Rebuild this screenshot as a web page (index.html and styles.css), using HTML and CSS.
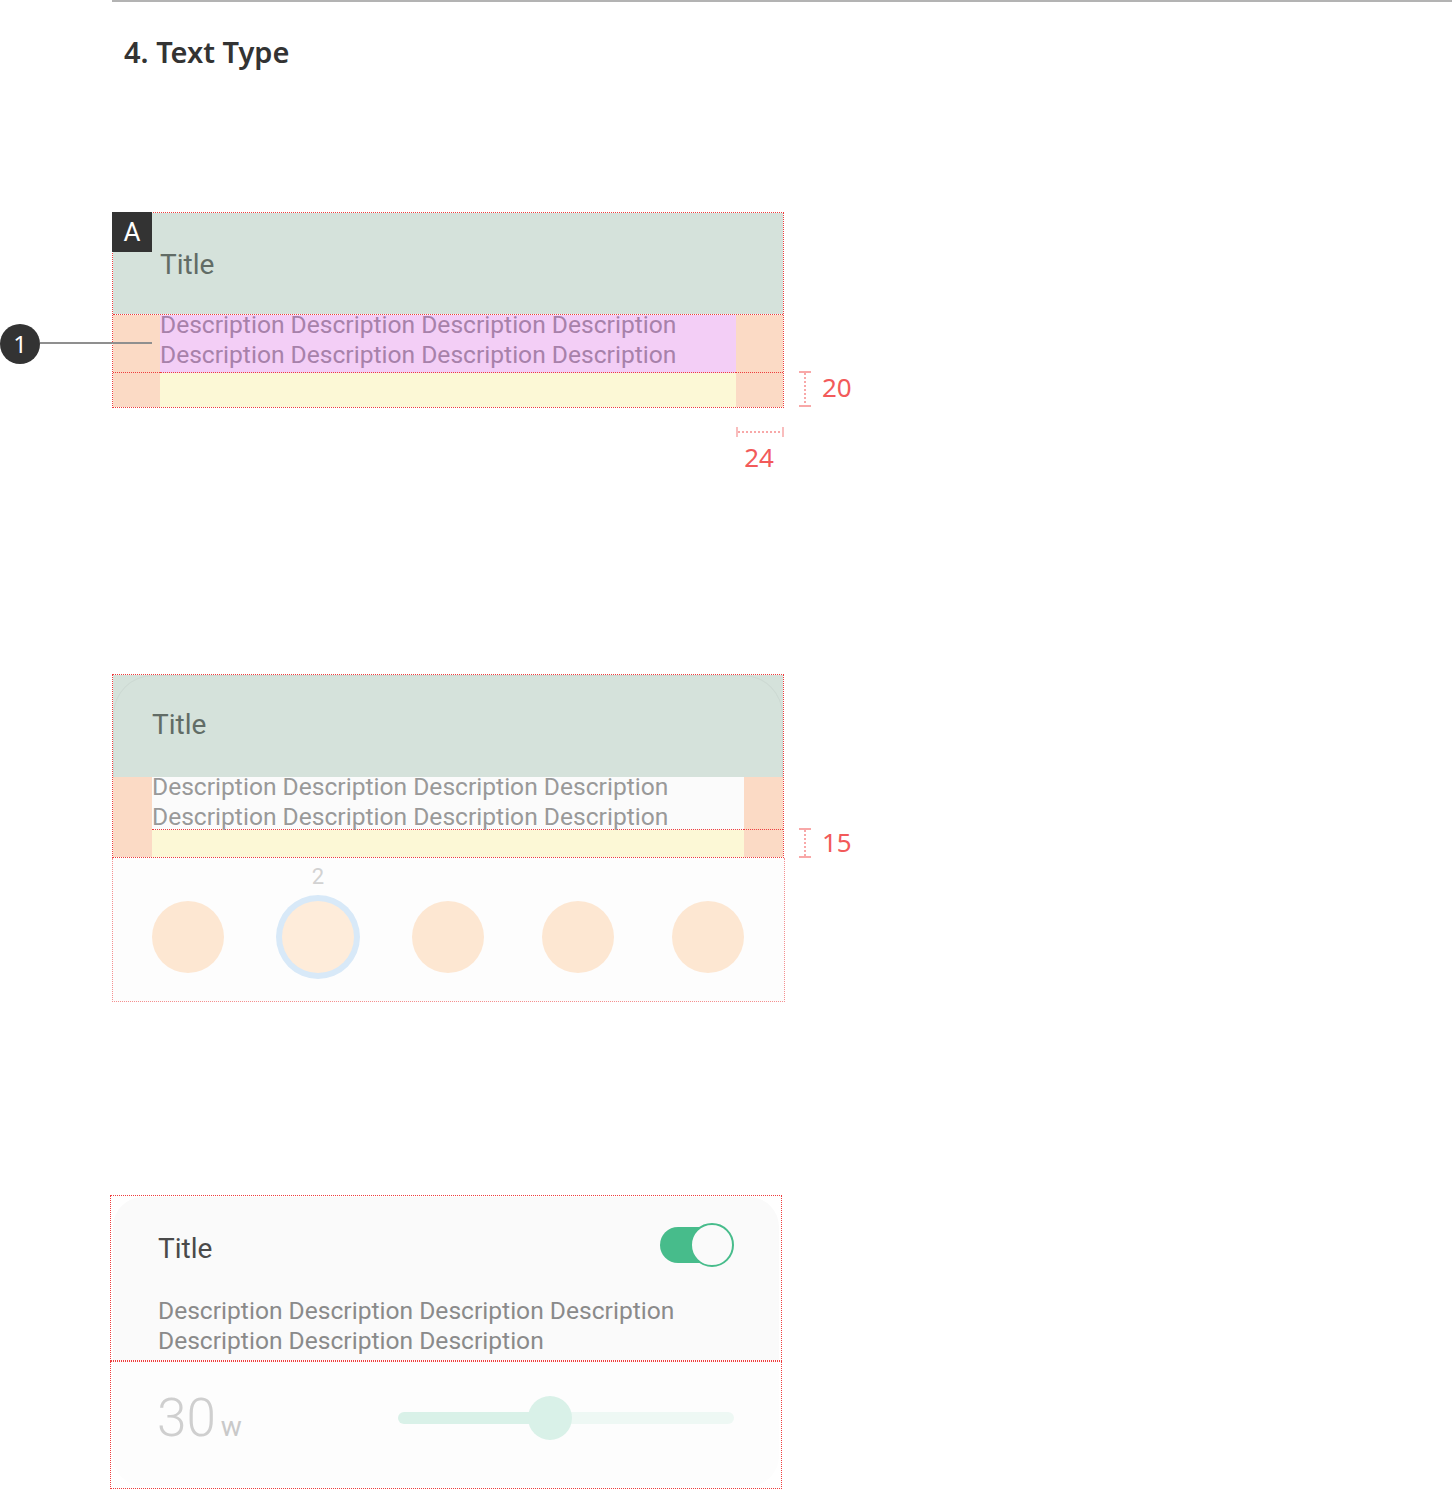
FILE: index.html
```html
<!DOCTYPE html>
<html>
  <head>
    <meta charset="utf-8">
    <link rel="stylesheet" href="styles.css">
  </head>
  <body>
    <div class="page">
      <div class="doc-rule"></div>
      <h2 class="section-title">4. Text Type</h2>

      <!-- A: title + description spec -->
      <section class="spec spec-a">
        <div class="title-area"><span class="item-title">Title</span></div>
        <div class="desc-grid">
          <div class="cell pad"></div>
          <div class="cell desc-cell">
            <p class="desc">Description Description Description Description Description Description Description Description</p>
          </div>
          <div class="cell pad"></div>
          <div class="cell pad"></div>
          <div class="cell bottom-space"></div>
          <div class="cell pad"></div>
        </div>
        <span class="tag">A</span>
        <div class="marker">
          <span class="marker-dot">1</span>
          <span class="marker-line"></span>
        </div>
        <div class="dim-v dim-a">
          <svg width="12" height="36" viewBox="0 0 12 36">
            <path d="M0 1H12M0 35H12" stroke="#f8a8a8" stroke-width="2"/>
            <path d="M6 2V34" stroke="#f8a8a8" stroke-width="2" stroke-dasharray="2 2"/>
          </svg>
          <span class="dim-label">20</span>
        </div>
        <div class="dim-h">
          <svg width="48" height="10" viewBox="0 0 48 10">
            <path d="M1 0V10M47 0V10" stroke="#f8a8a8" stroke-width="1.5"/>
            <path d="M2 5H46" stroke="#f8a8a8" stroke-width="2" stroke-dasharray="2 2"/>
          </svg>
          <span class="dim-label">24</span>
        </div>
      </section>

      <!-- B: title + description + colour picker -->
      <section class="spec spec-b">
        <div class="title-area rounded"><span class="item-title">Title</span></div>
        <div class="desc-grid">
          <div class="cell pad"></div>
          <div class="cell desc-cell">
            <p class="desc">Description Description Description Description Description Description Description Description</p>
          </div>
          <div class="cell pad"></div>
          <div class="cell pad"></div>
          <div class="cell bottom-space"></div>
          <div class="cell pad"></div>
        </div>
        <div class="dim-v dim-b">
          <svg width="12" height="30" viewBox="0 0 12 30">
            <path d="M0 1H12M0 29H12" stroke="#f8a8a8" stroke-width="2"/>
            <path d="M6 2V28" stroke="#f8a8a8" stroke-width="2" stroke-dasharray="2 2"/>
          </svg>
          <span class="dim-label">15</span>
        </div>
      </section>
      <div class="picker">
        <span class="swatch"></span>
        <span class="swatch selected"><span class="swatch-value">2</span></span>
        <span class="swatch"></span>
        <span class="swatch"></span>
        <span class="swatch"></span>
      </div>

      <!-- C: switch + slider -->
      <section class="setting">
        <div class="setting-main">
          <div class="setting-card card-top">
            <div class="setting-head">
              <span class="setting-title">Title</span>
              <span class="toggle">
                <span class="toggle-track"></span>
                <span class="toggle-thumb"></span>
              </span>
            </div>
            <p class="setting-desc">Description Description Description Description Description Description Description</p>
          </div>
        </div>
        <div class="setting-extra">
          <div class="setting-card card-bottom">
            <div class="level-row">
              <div class="level">
                <span class="level-value">30</span>
                <span class="level-unit">w</span>
              </div>
              <div class="slider"><span class="slider-thumb"></span></div>
            </div>
          </div>
        </div>
      </section>
    </div>
  </body>
</html>
```

FILE: styles.css
```css
body {
  margin: 0;
  background: #fff;
  font-family: Roboto, "Noto Sans", sans-serif;
}
.page {
  padding-left: 112px;
  padding-bottom: 20px;
}
.doc-rule {
  border-top: 2px solid #b3b3b3;
}
.section-title {
  margin: 31px 0 141px 12px;
  font: 600 29px/38px "Noto Sans", sans-serif;
  color: #333;
}

/* spec boxes */
.spec {
  position: relative;
  width: 672px;
  box-sizing: border-box;
  border: 1px dotted #ee3e3e;
}
.spec-a {
  margin-bottom: 266px;
}
.title-area {
  position: relative;
  height: 101px;
  display: flex;
  align-items: center;
  background: #d5e2db;
}
.title-area.rounded::after {
  content: "";
  position: absolute;
  inset: 0 0 -1px 0;
  border: 1px solid rgba(0,0,0,0.04);
  border-bottom: 0;
  border-radius: 40px 40px 0 0;
}
.item-title {
  font-size: 28px;
  color: #616c66;
}
.spec-a .item-title {
  padding-left: 47px;
  padding-top: 2px;
}
.spec-b .title-area {
  height: 102px;
}
.spec-b .item-title {
  padding-left: 39px;
  padding-bottom: 3px;
}
.desc-grid {
  display: grid;
}
.spec-a .desc-grid {
  grid-template-columns: 47px 1fr 47px;
  grid-template-rows: 58px 34px;
  border-top: 1px dotted #ee3e3e;
}
.spec-b .desc-grid {
  grid-template-columns: 39px 1fr 39px;
  grid-template-rows: 53px 27px;
}
.cell {
  box-sizing: border-box;
  min-width: 0;
}
.pad {
  background: #fbdac5;
}
.bottom-space {
  background: #fcf8d6;
}
.spec-a .cell:nth-child(-n+3) {
  border-bottom: 1px dotted #ee3e3e;
}
.spec-b .cell:nth-child(2),
.spec-b .cell:nth-child(3) {
  border-bottom: 1px dotted #ee3e3e;
}
.spec-a .desc-cell {
  background: #f3cef6;
}
.spec-b .desc-cell {
  background: #fbfbfb;
}
.desc {
  margin: -5px 0 0;
  font-size: 24.6px;
  line-height: 30px;
}
.spec-a .desc {
  color: #a781aa;
}
.spec-b .desc {
  color: #999;
}

/* overlays: tag, callout, dimensions */
.tag {
  position: absolute;
  z-index: 2;
  left: -1px;
  top: -1px;
  width: 40px;
  height: 40px;
  background: #333;
  color: #fff;
  font-size: 26px;
  line-height: 40px;
  text-align: center;
}
.marker {
  position: absolute;
  left: -113px;
  top: 111px;
  display: flex;
  align-items: center;
}
.marker-dot {
  width: 40px;
  height: 40px;
  border-radius: 50%;
  background: #333;
  color: #fff;
  font: 24px/40px "Noto Sans", sans-serif;
  text-align: center;
}
.marker-line {
  width: 112px;
  height: 2px;
  margin-top: -2px;
  background: #8f8f8f;
}
.dim-v {
  position: absolute;
  left: 686px;
  display: flex;
  align-items: center;
  gap: 11px;
}
.dim-v svg {
  display: block;
}
.dim-a {
  top: 158px;
}
.dim-a .dim-label {
  margin-top: -4px;
}
.dim-b {
  top: 153px;
}
.dim-b .dim-label {
  margin-top: -3px;
}
.dim-label {
  font: 26px/30px "Noto Sans", sans-serif;
  color: #f25a5a;
}
.dim-h {
  position: absolute;
  left: 622px;
  top: 214px;
  width: 48px;
  display: flex;
  flex-direction: column;
  align-items: center;
  gap: 5px;
}
.dim-h svg {
  display: block;
  margin-left: 1px;
}

/* colour picker */
.picker {
  width: 673px;
  box-sizing: border-box;
  padding: 43px 40px 28px 39px;
  display: flex;
  justify-content: space-between;
  border: 1px dotted #f59090;
  border-top: 0;
  background: #fdfdfd;
  margin-bottom: 193px;
}
.swatch {
  position: relative;
  width: 72px;
  height: 72px;
  border-radius: 50%;
  background: #fde7d2;
}
.swatch.selected {
  background: #feecda;
  box-shadow: 0 0 0 6px #d8e9f8;
}
.swatch-value {
  position: absolute;
  left: 0;
  right: 0;
  bottom: calc(100% + 12px);
  font-size: 22px;
  line-height: 24px;
  text-align: center;
  color: #d2d2d2;
}

/* setting card */
.setting {
  margin-left: -2px;
  width: 672px;
}
.setting-main,
.setting-extra {
  box-sizing: border-box;
  border: 1px dotted #ee3e3e;
}
.setting-main {
  height: 166px;
  padding: 1px 2px 0;
}
.setting-extra {
  height: 128px;
  padding: 0 2px 2px;
}
.setting-card {
  height: 100%;
  box-sizing: border-box;
  padding: 0 45px;
}
.card-top {
  padding-top: 26px;
  background: #fafafa;
  border-radius: 30px 30px 0 0;
}
.card-bottom {
  padding-top: 34px;
  background: #fdfdfd;
  border-radius: 0 0 30px 30px;
}
.setting-head {
  height: 44px;
  display: flex;
  align-items: center;
  justify-content: space-between;
}
.setting-title {
  margin-top: 6px;
  font-size: 28px;
  color: #4a4a4a;
}
.toggle {
  display: flex;
  align-items: center;
}
.toggle-track {
  width: 52px;
  height: 36px;
  border-radius: 18px 0 0 18px;
  background: #47bc8b;
}
.toggle-thumb {
  width: 44px;
  height: 44px;
  box-sizing: border-box;
  margin-left: -22px;
  border-radius: 50%;
  border: 2px solid #47bc8b;
  background: #fafafa;
}
.setting-desc {
  margin: 29px 0 0;
  font-size: 24.6px;
  line-height: 30px;
  color: #8a8a8a;
}
.level-row {
  height: 44px;
  display: flex;
  align-items: center;
  justify-content: space-between;
}
.level {
  display: flex;
  align-items: baseline;
  gap: 5px;
  color: #cfcfcf;
}
.level-value {
  font-size: 53px;
  font-weight: 300;
  line-height: 55px;
  margin-left: -1px;
}
.level-unit {
  font-size: 28px;
  color: #c9c9c9;
}
.slider {
  position: relative;
  width: 336px;
  height: 12px;
  border-radius: 6px;
  background: linear-gradient(to right, #d9f1e8 0 152px, #eef8f4 152px);
}
.slider-thumb {
  position: absolute;
  left: 130px;
  top: -16px;
  width: 44px;
  height: 44px;
  border-radius: 50%;
  background: #d9f1e8;
}
```
